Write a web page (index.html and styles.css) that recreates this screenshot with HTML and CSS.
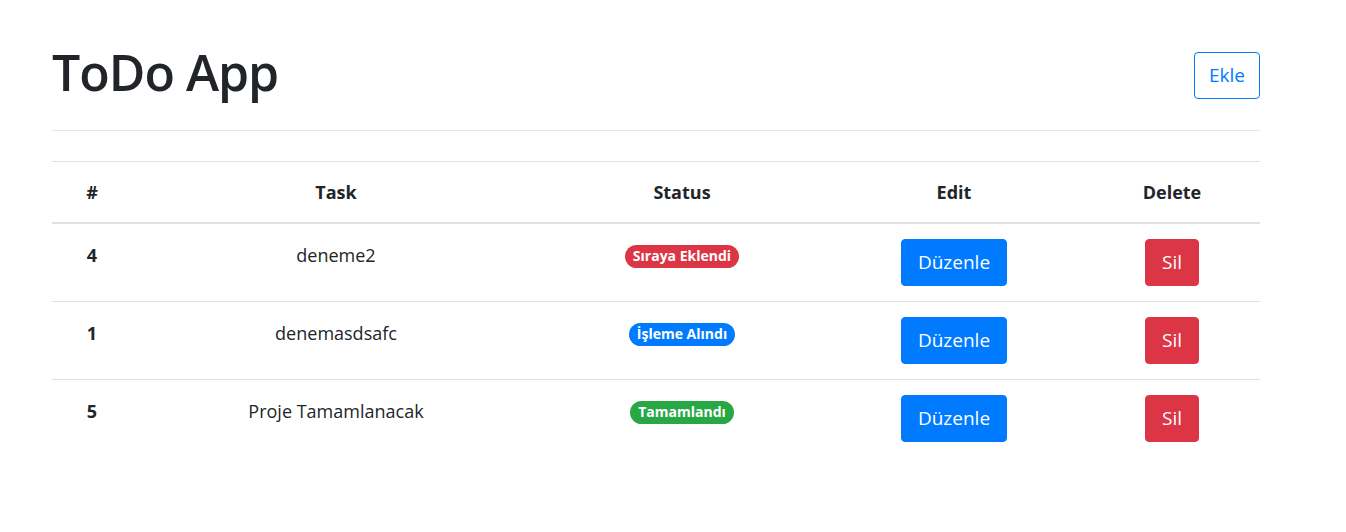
FILE: index.html
```html
<!DOCTYPE html>
<html lang="tr">
<head>
<meta charset="utf-8">
<title>ToDo App</title>
<link rel="stylesheet" href="styles.css">
</head>
<body>
<div class="container">
  <header class="app-header">
    <h1 class="app-title">ToDo App</h1>
    <button class="btn btn-outline-primary">Ekle</button>
  </header>
  <table class="todo-table">
    <thead>
      <tr>
        <th class="col-id">#</th>
        <th class="col-task">Task</th>
        <th class="col-status">Status</th>
        <th class="col-edit">Edit</th>
        <th class="col-delete">Delete</th>
      </tr>
    </thead>
    <tbody>
      <tr>
        <th class="row-id">4</th>
        <td>deneme2</td>
        <td><span class="badge badge-danger">Sıraya Eklendi</span></td>
        <td><button class="btn btn-primary">Düzenle</button></td>
        <td><button class="btn btn-danger">Sil</button></td>
      </tr>
      <tr>
        <th class="row-id">1</th>
        <td>denemasdsafc</td>
        <td><span class="badge badge-primary">İşleme Alındı</span></td>
        <td><button class="btn btn-primary">Düzenle</button></td>
        <td><button class="btn btn-danger">Sil</button></td>
      </tr>
      <tr>
        <th class="row-id">5</th>
        <td>Proje Tamamlanacak</td>
        <td><span class="badge badge-success">Tamamlandı</span></td>
        <td><button class="btn btn-primary">Düzenle</button></td>
        <td><button class="btn btn-danger">Sil</button></td>
      </tr>
    </tbody>
  </table>
</div>
</body>
</html>
```
FILE: styles.css
```css
* { box-sizing: border-box; }
html, body { margin: 0; background: #fff; }
body {
  font-family: "Open Sans", "Noto Sans", "Liberation Sans", sans-serif;
  color: #212529;
  font-size: 16px;
}
.container {
  width: 1208px;
  margin-left: 52px;
}
.app-header {
  display: flex;
  align-items: center;
  justify-content: space-between;
  padding: 40px 0 19px;
  border-bottom: 1px solid rgba(0,0,0,0.1);
}
.app-title {
  margin: 0;
  font-size: 50px;
  line-height: 71px;
  font-weight: 600;
  letter-spacing: -1px;
  position: relative;
  top: -3px;
}
.btn {
  font-family: inherit;
  display: inline-block;
  font-size: 19px;
  line-height: 29px;
  padding: 8px 16px;
  border: 1px solid transparent;
  border-radius: 4px;
  cursor: pointer;
  background: transparent;
}
.btn-outline-primary {
  color: #007bff;
  border-color: #007bff;
  padding: 8px 14px;
}
.btn-primary {
  color: #fff;
  background: #007bff;
  border-color: #007bff;
}
.btn-danger {
  color: #fff;
  background: #dc3545;
  border-color: #dc3545;
}
.todo-table {
  width: 100%;
  margin-top: 30px;
  border-collapse: collapse;
  table-layout: fixed;
}
.todo-table th, .todo-table td {
  text-align: center;
  border-top: 1px solid #dee2e6;
}
.todo-table thead th {
  font-size: 18px;
  font-weight: 700;
  line-height: 28px;
  padding: 16px 12px;
  border-bottom: 2px solid #dee2e6;
}
.todo-table tbody th,
.todo-table tbody td {
  vertical-align: top;
  padding: 15px 12px;
  font-size: 18px;
  line-height: 32px;
}
.todo-table tbody tr:first-child th,
.todo-table tbody tr:first-child td { border-top: 0; }
.row-id { font-weight: 700; }
.col-id { width: 80px; }
.col-task { width: 408px; }
.col-status { width: 284px; }
.col-edit { width: 260px; }
.col-delete { width: 176px; }
.badge {
  display: inline-block;
  vertical-align: middle;
  font-size: 14px;
  font-weight: 700;
  line-height: 1;
  padding: 4px 8px 5px;
  border-radius: 12px;
  color: #fff;
  position: relative;
  top: -1px;
}
.badge-danger { background: #dc3545; }
.badge-primary { background: #007bff; }
.badge-success { background: #28a745; }
```
